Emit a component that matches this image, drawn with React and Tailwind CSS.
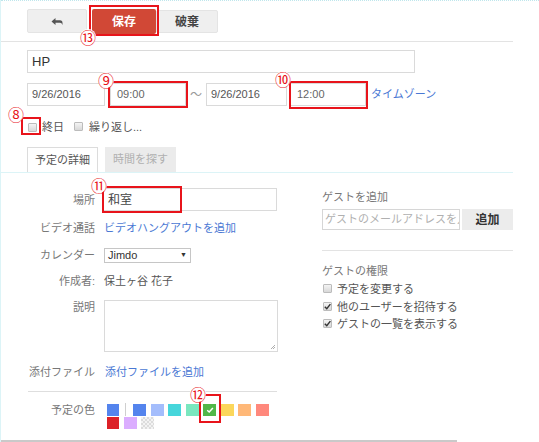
import React from 'react'

const font = { fontFamily: '"Liberation Sans", "Noto Sans CJK JP", sans-serif' }

function Check({ checked }) {
  return (
    <span className="relative inline-block h-[9px] w-[9px] shrink-0 rounded-[1px] border border-[#bcbcbc] bg-gradient-to-b from-[#f4f4f4] to-[#d8d8d8]">
      {checked && (
        <svg viewBox="0 0 10 10" className="absolute left-[-1px] top-[-1px] h-[9px] w-[9px]">
          <path d="M2 5.2 L4.2 7.4 L8.2 2.4" fill="none" stroke="#333" strokeWidth="1.6" />
        </svg>
      )}
    </span>
  )
}

function Mark({ n, className }) {
  return (
    <span
      style={{ fontFamily: '"Noto Sans CJK JP", sans-serif' }}
      className={`absolute flex h-[16px] w-[16px] items-center justify-center rounded-full bg-white text-[16px] leading-none text-[#e8141b] ${className}`}
    >
      {n}
    </span>
  )
}

function Box({ className }) {
  return <span className={`pointer-events-none absolute border-2 border-[#e8141b] ${className}`} />
}

function Row({ label, children, className = '', top = false }) {
  return (
    <div className={`flex ${top ? 'items-start' : 'items-center'} ${className}`}>
      <span className="w-[68px] whitespace-nowrap text-right leading-[14px] text-[#777]">{label}</span>
      {children}
    </div>
  )
}

const swatches1 = ['#5484ed', '#a4bdfc', '#46d6db', '#7ae7bf', '#51b749', '#fbd75b', '#ffb878', '#ff887c']

export default function App() {
  return (
    <div
      style={font}
      className="relative flex h-[442px] w-[539px] flex-col overflow-hidden border-l border-[#dcf4f7] bg-white text-[11px] text-[#555]"
    >
      <div className="h-0 w-full border-t border-dotted border-[#bfe6ec]" />

      {/* toolbar */}
      <div className="flex h-[40px] items-start pl-[26px] pt-[7px]">
        <button className="mt-[1px] flex h-[24px] w-[60px] items-center justify-center rounded-[2px] border border-[#e4e4e4] bg-[#efefef]">
          <svg viewBox="0 0 12 9" className="h-[9px] w-[12px]">
            <path d="M0.5 4.5 L4.5 1 L4.5 3.3 L9 3.3 Q11.5 3.3 11.5 6 L11.5 8 Q10.8 5.8 9 5.8 L4.5 5.8 L4.5 8 Z" fill="#555" />
          </svg>
        </button>
        <button className="ml-[5px] mt-[1px] flex h-[25px] w-[64px] items-center justify-center rounded-[2px] bg-[#d14836] text-[12px] font-bold text-white">
          保存
        </button>
        <button className="mt-[2px] flex h-[23px] w-[62px] items-center justify-center rounded-[2px] border border-[#e4e4e4] bg-[#efefef] text-[12px] font-bold text-[#444]">
          破棄
        </button>
      </div>
      <div className="w-[512px] border-t border-[#e3e3e3]" />

      {/* title */}
      <div className="ml-[26px] mt-[8px] flex h-[23px] w-[388px] items-center border border-[#dadada] px-[4px] text-[13px] text-[#333]">
        HP
      </div>

      {/* date row */}
      <div className="ml-[26px] mt-[10px] flex h-[23px] items-center">
        <div className="flex h-[23px] w-[78px] items-center border border-[#dadada] px-[4px] text-[#555]">9/26/2016</div>
        <div className="ml-[5px] flex h-[23px] w-[76px] items-center border border-[#dadada] px-[6px] text-[#666]">09:00</div>
        <span className="w-[20px] text-center text-[12px] text-[#999]">〜</span>
        <div className="flex h-[23px] w-[81px] items-center border border-[#dadada] px-[4px] text-[#555]">9/26/2016</div>
        <div className="ml-[3px] flex h-[23px] w-[76px] items-center border border-[#dadada] px-[6px] text-[#666]">12:00</div>
        <a className="ml-[5px] text-[#4a78d4]">タイムゾーン</a>
      </div>

      {/* all day / repeat */}
      <div className="ml-[27px] mt-[13px] flex h-[16px] items-center text-[#555]">
        <Check />
        <span className="ml-[5px]">終日</span>
        <span className="ml-[10px]"><Check /></span>
        <span className="ml-[6px]">繰り返し...</span>
      </div>

      {/* tabs */}
      <div className="ml-[26px] mt-[12px] flex h-[25px] items-end">
        <div className="flex h-[25px] w-[71px] items-center justify-center border border-b-0 border-[#dcdcdc] bg-white text-[#555]">
          予定の詳細
        </div>
        <div className="ml-[7px] flex h-[25px] w-[71px] items-center justify-center bg-[#ebebeb] text-[#b0b0b0]">
          時間を探す
        </div>
      </div>
      <div className="w-[512px] border-t border-[#dcf4f7]" />

      {/* body */}
      <div className="flex">
        <div className="ml-[26px] flex w-[251px] flex-col">
          <Row label="場所" className="mt-[15px] h-[23px]">
            <div className="ml-[7px] flex h-[23px] w-[175px] items-center border border-[#dadada] px-[5px] text-[12px] text-[#444]">
              和室
            </div>
          </Row>
          <Row label="ビデオ通話" className="mt-[6px] h-[22px]">
            <a className="ml-[9px] text-[#4a78d4]">ビデオハングアウトを追加</a>
          </Row>
          <Row label="カレンダー" className="mt-[5px] h-[22px]">
            <div className="ml-[9px] flex h-[15px] w-[87px] items-center justify-between border border-[#c6c6c6] px-[3px] text-[#333]">
              <span>Jimdo</span>
              <span className="text-[7px]">▼</span>
            </div>
          </Row>
          <Row label="作成者:" className="mt-[4px] h-[22px]">
            <span className="ml-[9px] text-[#555]">保土ヶ谷 花子</span>
          </Row>
          <Row label="説明" className="mt-[8px]" top>
            <div className="relative ml-[9px] h-[52px] w-[174px] border border-[#dadada]">
              <svg viewBox="0 0 6 6" className="absolute bottom-[1px] right-[1px] h-[6px] w-[6px]">
                <path d="M1 5 L5 1 M3 5 L5 3" stroke="#999" strokeWidth="0.8" />
              </svg>
            </div>
          </Row>
          <Row label="添付ファイル" className="mt-[9px] h-[22px]">
            <a className="ml-[10px] text-[#4a78d4]">添付ファイルを追加</a>
          </Row>
          <div className="ml-[1px] mt-[8px] w-[249px] border-t border-[#dedede]" />
          <Row label="予定の色" className="mt-[11px]" top>
            <div className="ml-[12px] flex flex-col">
              <div className="flex items-center">
                <span className="h-[12px] w-[12px] bg-[#5484ed]" />
                <span className="ml-[6px] h-[13px] w-px bg-[#cfcfcf]" />
                <div className="ml-[7px] flex gap-[4.5px]">
                  {swatches1.map((c) => (
                    <span key={c} className="relative flex h-[12px] w-[13px] items-center justify-center" style={{ background: c }}>
                      {c === '#51b749' && (
                        <svg viewBox="0 0 10 10" className="h-[8px] w-[8px]">
                          <path d="M1.5 5.3 L4 7.6 L8.6 2.4" fill="none" stroke="#fff" strokeWidth="1.8" />
                        </svg>
                      )}
                    </span>
                  ))}
                </div>
              </div>
              <div className="mt-[1px] flex gap-[4.5px]">
                <span className="h-[12px] w-[12px] bg-[#dc2127]" />
                <span className="h-[12px] w-[13px] bg-[#dbadff]" />
                <span className="h-[12px] w-[13px] bg-[repeating-conic-gradient(#dcdcdc_0%_25%,#f3f3f3_0%_50%)] bg-[length:4px_4px]" />
              </div>
            </div>
          </Row>
        </div>

        <div className="ml-[44px] flex w-[191px] flex-col text-[#777]">
          <div className="mt-[16px] h-[16px] leading-[16px]">ゲストを追加</div>
          <div className="mt-[4px] flex h-[21px]">
            <div className="flex h-[21px] w-[138px] items-center overflow-hidden whitespace-nowrap border border-[#d6d6d6] px-[2px] text-[#b0b0b0]">
              ゲストのメールアドレスを入力
            </div>
            <button className="ml-[2px] flex h-[21px] w-[51px] items-center justify-center bg-[#ececec] text-[12px] font-bold text-[#333]">
              追加
            </button>
          </div>
          <div className="mt-[20px] border-t border-[#e3e3e3]" />
          <div className="mt-[12px] h-[16px] leading-[16px]">ゲストの権限</div>
          <div className="mt-[1px] flex h-[18px] items-center text-[#555]">
            <span className="ml-[1px]"><Check /></span>
            <span className="ml-[5px]">予定を変更する</span>
          </div>
          <div className="flex h-[18px] items-center text-[#555]">
            <span className="ml-[1px]"><Check checked /></span>
            <span className="ml-[5px]">他のユーザーを招待する</span>
          </div>
          <div className="flex h-[17px] items-center text-[#555]">
            <span className="ml-[1px]"><Check checked /></span>
            <span className="ml-[5px]">ゲストの一覧を表示する</span>
          </div>
        </div>
      </div>

      <div className="mt-auto h-[2px] w-[456px] bg-[#c9c9c9]" />

      {/* annotations */}
      <Box className="left-[88px] top-[5px] h-[31px] w-[70px]" />
      <Mark n="⑬" className="left-[79px] top-[29px]" />
      <Box className="left-[107px] top-[81px] h-[27px] w-[80px]" />
      <Mark n="⑨" className="left-[97px] top-[72px]" />
      <Box className="left-[288px] top-[81px] h-[28px] w-[79px]" />
      <Mark n="⑩" className="left-[274px] top-[71px]" />
      <Box className="left-[20px] top-[117px] h-[18px] w-[20px]" />
      <Mark n="⑧" className="left-[7px] top-[106px]" />
      <Box className="left-[101px] top-[186px] h-[27px] w-[80px]" />
      <Mark n="⑪" className="left-[90px] top-[177px]" />
      <Box className="left-[198px] top-[394px] h-[29px] w-[22px]" />
      <Mark n="⑫" className="left-[189px] top-[386px]" />
    </div>
  )
}
